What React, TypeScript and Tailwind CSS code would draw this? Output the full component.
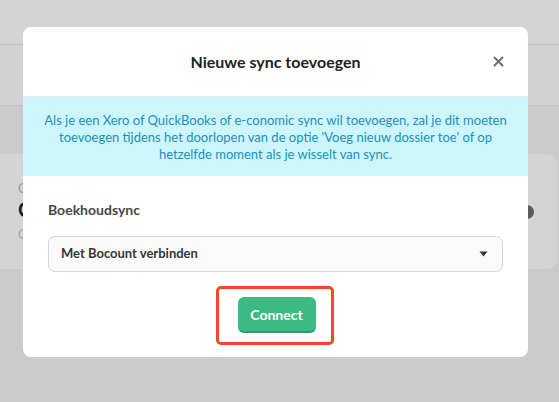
import React from "react"

const font = { fontFamily: "Lato, 'Open Sans', sans-serif" }

function CloseIcon() {
    return (
        <svg width="11" height="11" viewBox="0 0 11 11" fill="none">
            <path d="M1.5 1.5L9.5 9.5M9.5 1.5L1.5 9.5" stroke="#6e6e6e" strokeWidth="2" strokeLinecap="round" />
        </svg>
    )
}

function Caret() {
    return (
        <svg width="9" height="6" viewBox="0 0 9 6">
            <path d="M0.5 0.5H8.5L4.5 5.5Z" fill="#333" />
        </svg>
    )
}

export default function App() {
    return (
        <div className="relative w-[559px] h-[402px] overflow-hidden bg-[#cbcbcb]" style={font}>
            {/* dimmed page behind the modal */}
            <div className="h-[45px] bg-[#d4d4d4] border-b border-[#bfbfbf]" />
            <div className="h-[61px] bg-[#d3d3d3] border-b border-[#c2c2c2]" />
            <div className="pt-[48px]">
                <div className="ml-[-10px] w-[567px] h-[115px] rounded-[10px] bg-[#d4d4d4] flex items-start justify-between">
                    <div className="pl-[28px] pt-[26px] flex flex-col">
                        <span className="text-[13px] leading-[16px] text-[#9b9b9b]">C</span>
                        <span className="text-[20px] leading-[26px] font-bold text-[#1c1c1c]">C</span>
                        <span className="mt-[4px] text-[13px] leading-[16px] text-[#a3a3a3]">C</span>
                    </div>
                    <div className="mt-[51px] mr-[23px] w-[14px] h-[14px] rounded-full bg-[#5b5b5b]" />
                </div>
            </div>

            {/* modal */}
            <div className="absolute left-[23px] top-[27px] w-[505px] rounded-[8px] bg-white overflow-hidden">
                <div className="relative h-[70px] flex items-center justify-center border-b border-[#ececec]">
                    <h2 className="text-[16px] font-bold text-[#222]">Nieuwe sync toevoegen</h2>
                    <button className="absolute right-[24px] top-[29px]">
                        <CloseIcon />
                    </button>
                </div>
                <div className="bg-[#cdf6fc] px-[20px] pt-[15px] pb-[13px] text-center text-[13px] leading-[17px] text-[#2290b6]">
                    Als je een Xero of QuickBooks of e-conomic sync wil toevoegen, zal je dit moeten toevoegen tijdens het doorlopen van de optie 'Voeg nieuw dossier toe' of op hetzelfde moment als je wisselt van sync.
                </div>
                <div className="px-[25px] pt-[24px] pb-[12px]">
                    <div className="text-[14px] leading-[20px] font-bold text-[#474747]">Boekhoudsync</div>
                    <div className="mt-[16px] h-[36px] rounded-[7px] border border-[#d6d6d6] bg-[#fafafa] flex items-center justify-between pl-[12px] pr-[14px]">
                        <span className="text-[13px] font-bold text-[#363636]">Met Bocount verbinden</span>
                        <Caret />
                    </div>
                    <div className="mt-[14px] flex justify-center">
                        <div className="mr-[2px] rounded-[5px] border-[3px] border-[#f24a24] pl-[19px] pr-[15px] pt-[8px] pb-[9px]">
                            <button className="h-[36px] w-[78px] rounded-[6px] bg-[#3db983] border-b-2 border-[#2f9c6c] text-white text-[14px] font-bold">
                                Connect
                            </button>
                        </div>
                    </div>
                </div>
            </div>
        </div>
    )
}
